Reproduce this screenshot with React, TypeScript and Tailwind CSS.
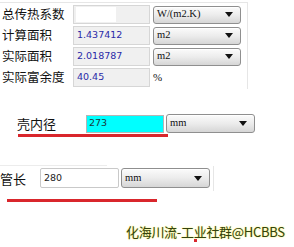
const cjk = "font-['Noto_Sans_CJK_SC',sans-serif]";

function Caret() {
  return (
    <svg width="8" height="5" viewBox="0 0 8 5" className="shrink-0">
      <path d="M0 0H8L4 5Z" fill="#111" />
    </svg>
  );
}

function Combo({ label, w, h }: { label: string; w: string; h: string }) {
  return (
    <div
      className={`${w} ${h} flex items-center justify-between rounded-[3px] border border-[#8f8f8f] bg-gradient-to-b from-[#fbfbfb] via-[#ececec] to-[#d6d6d6] pl-[3px] pr-[7px] font-['Liberation_Serif',serif] text-[10.5px] text-[#111] shadow-[inset_0_1px_0_#fff]`}
    >
      <span className="leading-none">{label}</span>
      <Caret />
    </div>
  );
}

const rows = [
  { label: "总传热系数", value: "", unit: "W/(m2.K)", blank: true },
  { label: "计算面积", value: "1.437412", unit: "m2" },
  { label: "实际面积", value: "2.018787", unit: "m2" },
  { label: "实际富余度", value: "40.45", unit: "%" },
];

export default function App() {
  return (
    <div className="relative h-[247px] w-[294px] overflow-hidden bg-white">
      {/* result panel */}
      <div className="mt-[2px] flex h-[87px] w-[248px] flex-col gap-[2px] border-r border-t border-[#e6e6e6] pt-[2px]">
        {rows.map((r) => (
          <div key={r.label} className="flex h-[19px] items-center">
            <span className={`w-[73px] pl-[2px] text-[12.5px] leading-none text-[#111] ${cjk}`}>
              {r.label}
            </span>
            <div className="flex h-[19px] w-[77px] items-center border border-[#d6d6d6] bg-[#f0f0f0] pl-[3px] font-['DejaVu_Sans',sans-serif] text-[9.5px] text-[#2a2aa8]">
              {r.blank ? <div className="ml-[-1px] h-[15px] w-[40px] bg-white" /> : r.value}
            </div>
            {r.unit === "%" ? (
              <span className="ml-[3px] font-['Liberation_Serif',serif] text-[11px] text-[#111]">%</span>
            ) : (
              <div className="ml-[3px]">
                <Combo label={r.unit} w="w-[88px]" h="h-[18px]" />
              </div>
            )}
          </div>
        ))}
      </div>

      {/* shell inner diameter */}
      <div className="mt-[25px] flex h-[19px] items-center pl-[17px]">
        <span className={`w-[69px] text-[13px] leading-none text-[#111] ${cjk}`}>壳内径</span>
        <div className="flex h-[18px] w-[78px] items-center border border-[#b5b5b5] bg-[#00ffff] pl-[2px] font-['DejaVu_Sans',sans-serif] text-[9.5px] text-[#1a3a3a]">
          273
        </div>
        <div className="ml-[2px]">
          <Combo label="mm" w="w-[89px]" h="h-[19px]" />
        </div>
      </div>
      <div className="ml-[18px] mt-[1px] h-[3px] w-[150px] bg-[#d9262c]" />

      {/* tube length */}
      <div className="mt-[28px] h-px w-[107px] bg-[#ececec]" />
      <div className="flex">
        <div className="mt-[2px] flex h-[20px] items-center">
          <span className={`w-[40px] text-[13px] leading-none text-[#111] ${cjk}`}>管长</span>
          <div className="flex h-[20px] w-[79px] items-center rounded-[2px] border border-[#c9c9c9] bg-white pl-[3px] font-['DejaVu_Sans',sans-serif] text-[9.5px] text-[#222]">
            280
          </div>
          <div className="ml-[2px]">
            <Combo label="mm" w="w-[89px]" h="h-[20px]" />
          </div>
        </div>
        <div className="ml-[3px] h-[25px] w-px bg-[#e6e6e6]" />
      </div>
      <div className="ml-[7px] mt-[8px] h-[3px] w-[150px] bg-[#d9262c]" />

      {/* watermark */}
      <div
        className={`ml-[126px] mt-[23px] text-[13px] leading-[14px] tracking-[-0.3px] text-[#33420f] [text-shadow:0_0_2px_#f4f06a,0_0_1px_#fffb9a] ${cjk}`}
      >
        化海川流-工业社群@HCBBS
      </div>
      <div className="ml-[194px] h-[3px] w-[3px] bg-[#d9262c]" />
    </div>
  );
}
